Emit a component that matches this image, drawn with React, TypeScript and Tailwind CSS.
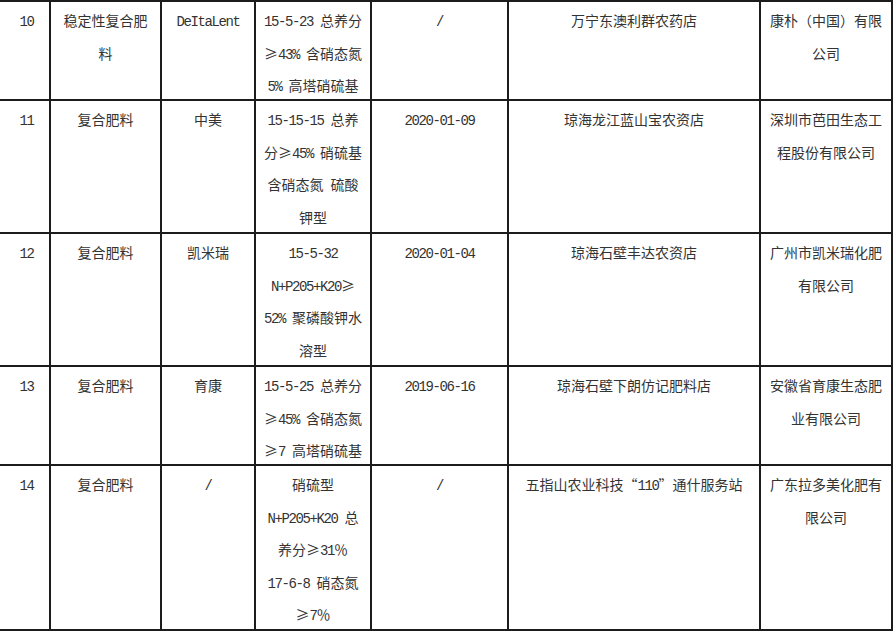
import React from "react";

type Row = string[][];

const rows: Row[] = [
  [
    ["10"],
    ["稳定性复合肥", "料"],
    ["DeItaLent"],
    ["15-5-23 总养分", "≥43% 含硝态氮", "5% 高塔硝硫基"],
    ["/"],
    ["万宁东澳利群农药店"],
    ["康朴（中国）有限", "公司"],
  ],
  [
    ["11"],
    ["复合肥料"],
    ["中美"],
    ["15-15-15 总养", "分≥45% 硝硫基", "含硝态氮 硫酸", "钾型"],
    ["2020-01-09"],
    ["琼海龙江蓝山宝农资店"],
    ["深圳市芭田生态工", "程股份有限公司"],
  ],
  [
    ["12"],
    ["复合肥料"],
    ["凯米瑞"],
    ["15-5-32", "N+P205+K20≥", "52% 聚磷酸钾水", "溶型"],
    ["2020-01-04"],
    ["琼海石壁丰达农资店"],
    ["广州市凯米瑞化肥", "有限公司"],
  ],
  [
    ["13"],
    ["复合肥料"],
    ["育康"],
    ["15-5-25 总养分", "≥45% 含硝态氮", "≥7 高塔硝硫基"],
    ["2019-06-16"],
    ["琼海石壁下朗仿记肥料店"],
    ["安徽省育康生态肥", "业有限公司"],
  ],
  [
    ["14"],
    ["复合肥料"],
    ["/"],
    ["硝硫型", "N+P205+K20 总", "养分≥31％", "17-6-8 硝态氮", "≥7％"],
    ["/"],
    ["五指山农业科技“110”通什服务站"],
    ["广东拉多美化肥有", "限公司"],
  ],
];

function Line({ text }: { text: string }) {
  const parts = text.split(/([\x20-\x7e]+)/).filter((p) => p.length > 0);
  return (
    <div className="whitespace-pre h-[32.5px]">
      {parts.map((p, i) =>
        /^[\x20-\x7e]+$/.test(p) ? (
          <span
            key={i}
            className="font-['Liberation_Mono',monospace] tracking-[-1.4px]"
          >
            {p}
          </span>
        ) : (
          <span key={i}>{p}</span>
        )
      )}
    </div>
  );
}

export default function App() {
  return (
    <div className="w-[896px] h-[632px] bg-white overflow-hidden">
      <div className="grid w-fit grid-cols-[49px_109px_92px_114px_135px_250px_130px] grid-rows-[97px_131px_131px_97px_163px] gap-[2px] bg-[#1c1c1c] pt-[2px] pr-[2px] pb-[2px] font-['Noto_Sans_CJK_SC',sans-serif] text-[14px] leading-[32.5px] text-[#333333]">
        {rows.map((row, ri) =>
          row.map((cell, ci) => (
            <div
              key={`${ri}-${ci}`}
              className={
                ci === 0
                  ? "bg-white text-center pt-[2px] pl-[4px] overflow-hidden"
                  : "bg-white text-center pt-[2px] overflow-hidden"
              }
            >
              {cell.map((t, li) => (
                <Line key={li} text={t} />
              ))}
            </div>
          ))
        )}
      </div>
    </div>
  );
}
